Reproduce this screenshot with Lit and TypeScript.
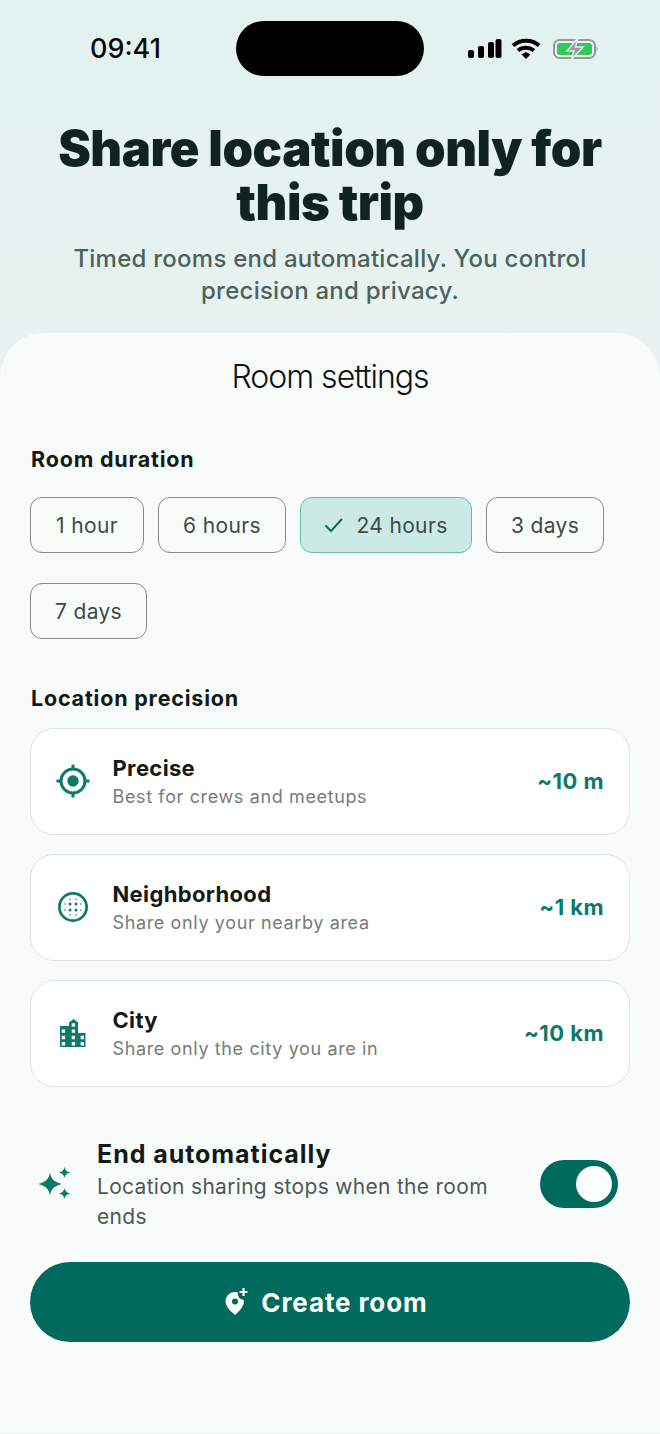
import { LitElement, css, html, svg } from "lit";
import { customElement } from "lit/decorators.js";

const durations = [
  { label: "1 hour", w: 114 },
  { label: "6 hours", w: 128 },
  { label: "24 hours", w: 172, active: true },
  { label: "3 days", w: 118 },
  { label: "7 days", w: 117 },
];

const targetIcon = svg`<svg width="36" height="36" viewBox="0 0 24 24"><circle cx="12" cy="12" r="8" fill="none" stroke="#0b7a68" stroke-width="2"/><circle cx="12" cy="12" r="3.800" fill="#0b7a68"/><path d="M12 1v3M12 20v3M1 12h3M20 12h3" stroke="#0b7a68" stroke-width="2" fill="none"/></svg>`;

const gridIcon = svg`<svg width="36" height="36" viewBox="0 0 24 24"><circle cx="12" cy="12" r="9.100" fill="none" stroke="#0b7a68" stroke-width="1.800"/><g fill="#0b7a68"><circle cx="10" cy="10" r="1"/><circle cx="14" cy="10" r="1"/><circle cx="10" cy="14" r="1"/><circle cx="14" cy="14" r="1"/><circle cx="10" cy="6.800" r=".5"/><circle cx="14" cy="6.800" r=".5"/><circle cx="10" cy="17.200" r=".5"/><circle cx="14" cy="17.200" r=".5"/><circle cx="6.800" cy="10" r=".5"/><circle cx="6.800" cy="14" r=".5"/><circle cx="17.200" cy="10" r=".5"/><circle cx="17.200" cy="14" r=".5"/></g></svg>`;

const cityIcon = svg`<svg width="26" height="28" viewBox="0 0 26 28"><path fill="#0b7a68" fill-rule="evenodd" d="M0 7h9V3.500L13.500 0 18 3.500V14h7.500v14H0V7Zm11.700-2.700v3.400h3.400V4.300h-3.400ZM1.700 10.400v3.400h3.400v-3.400H1.700Zm10 0v3.400h3.400v-3.400h-3.400ZM1.700 16.800v3.400h3.400v-3.400H1.700Zm10 0v3.400h3.400v-3.400h-3.400Zm8.900 0v3.400H24v-3.400h-3.400ZM1.700 23v3.400h3.400V23H1.700Zm10 0v3.400h3.400V23h-3.400Zm8.900 0v3.400H24V23h-3.400Z"/></svg>`;

const sparkIcon = svg`<svg width="34" height="36" viewBox="0 0 34 36"><g fill="#0b7a68"><path d="M12 6.500C13.200 13 15.500 15.500 23.500 18 15.500 20.500 13.200 23 12 29.500 10.800 23 8.500 20.500 .5 18 8.500 15.500 10.800 13 12 6.500Z"/><path d="M26.500 1c.8 3.300 2 4.500 5.500 5.500-3.500 1-4.700 2.200-5.500 5.500-.8-3.300-2-4.500-5.500-5.500 3.500-1 4.700-2.200 5.500-5.500Z"/><path d="M26.500 22c.8 3.300 2 4.500 5.500 5.500-3.500 1-4.700 2.200-5.500 5.500-.8-3.300-2-4.500-5.500-5.500 3.500-1 4.700-2.200 5.500-5.500Z"/></g></svg>`;

const pinIcon = svg`<svg width="24" height="28" viewBox="0 0 24 28"><path fill="#fff" fill-rule="evenodd" d="M11 4c1 0 2 .1 2.800.4a6 6 0 0 0 5.700 7.300c.2.700.3 1.300.3 2 0 4.400-4.500 9.700-8.800 13.300C6.700 23.400 1.500 18.200 1.500 13.500 1.500 8.200 5.700 4 11 4Zm0 6.500a3 3 0 1 0 0 6 3 3 0 0 0 0-6Z"/><path d="M19.500 0v8M15.500 4h8" stroke="#fff" stroke-width="2.200" fill="none"/></svg>`;

const statusIcons = svg`<svg width="130" height="24" viewBox="0 0 130 24">
  <g fill="#000"><rect x="0" y="13" width="6" height="8" rx="2"/><rect x="10" y="9" width="6" height="12" rx="2"/><rect x="20" y="5" width="6" height="16" rx="2"/><rect x="27.500" y="2" width="6" height="19" rx="2"/></g>
  <g fill="none" stroke="#000" stroke-width="4"><path d="M45 8.500C52.500 2 64 2 71 8.500"/><path d="M50 13.500c4.500-3.800 11-3.800 16 0"/></g><path d="M53.500 17.500 58 15l4.500 2.500L58 22Z" fill="#000"/>
  <rect x="86" y="3" width="41" height="18" rx="5.500" fill="none" stroke="#999" stroke-width="2"/><rect x="89" y="6" width="35" height="12" rx="3" fill="#34c759"/><path d="M128.500 9.500c1.300.4 1.300 4.600 0 5Z" fill="#999"/>
  <path d="M110 1 99 14h7l-3 9 12-13h-7.500Z" fill="#999" stroke="#e3f2ef" stroke-width="1.500"/></svg>`;

@customElement("app-root")
export class AppRoot extends LitElement {
  static styles = css`
    :host {
      display: block;
      width: 660px;
      height: 1434px;
      overflow: hidden;
      font-family: Inter, "Noto Sans", sans-serif;
      background: linear-gradient(#e3f2ef, #e8f2f0 340px);
      color: #111a18;
    }
    .status {
      display: flex;
      align-items: center;
      height: 55px;
      padding: 21px 0 0 90px;
    }
    .time { width: 146px; font-size: 27px; font-weight: 500; color: #0a0a0a; }
    .island { width: 188px; height: 55px; border-radius: 28px; background: #000; }
    .status-icons { margin-left: 44px; display: flex; padding-top: 1px; }
    .hero { padding: 46px 30px 0; text-align: center; }
    h1 { margin: 0; font-size: 49px; line-height: 54px; font-weight: 900; letter-spacing: -0.45px; color: #10231f; }
    .lead { margin: 13px 0 0; font-size: 24px; line-height: 32px; font-weight: 500; letter-spacing: 0.25px; color: #4b625d; }
    .sheet {
      margin-top: 26px;
      height: 1100px;
      border-radius: 44px 44px 0 0;
      background: #f7fcfb;
      padding: 0 30px;
      box-sizing: border-box;
    }
    h2 { margin: 0; padding-top: 24px; text-align: center; font-size: 32px; line-height: 40px; font-weight: 300; color: #111; letter-spacing: -1px; }
    .label { padding-left: 1px; font-size: 21.5px; line-height: 28px; font-weight: 700; letter-spacing: 0.8px; color: #111a18; }
    .label.first { margin-top: 48px; }
    .label.second { margin-top: 45px; }
    .chips { display: flex; flex-wrap: wrap; gap: 30px 14px; margin-top: 24px; }
    .chip {
      display: flex;
      align-items: center;
      justify-content: center;
      gap: 12px;
      height: 56px;
      box-sizing: border-box;
      border: 1.500px solid #858c8a;
      border-radius: 12px;
      font-size: 21px;
      letter-spacing: 0.35px;
      color: #3e4a47;
    }
    .chip.active { background: #cbeae5; border-color: #62bfae; }
    .cards { display: flex; flex-direction: column; gap: 19px; margin-top: 16px; }
    .card {
      display: flex;
      align-items: center;
      height: 107px;
      box-sizing: border-box;
      background: #fff;
      border: 1.500px solid #dfe3e2;
      border-radius: 24px;
      padding: 0 25px 0 24px;
    }
    .card .ic { width: 36px; display: flex; justify-content: center; margin: 0 21.500px 2px 0; }
    .card .txt { flex: 1; }
    .card .t { font-size: 22px; line-height: 28px; font-weight: 700; letter-spacing: 0.35px; color: #141917; }
    .card .s { font-size: 18px; line-height: 26px; letter-spacing: 0.63px; color: #757c7a; margin-top: 2px; }
    .card .v { font-size: 22px; font-weight: 700; letter-spacing: 0.45px; color: #0b7a68; padding-bottom: 2px; }
    .auto { display: flex; align-items: center; margin-top: 51px; padding-left: 8px; }
    .auto .ic { display: flex; margin: 0 25px 3px 0; }
    .auto .txt { width: 418px; }
    .auto .t { font-size: 25px; line-height: 32px; font-weight: 700; letter-spacing: 0.95px; color: #141917; }
    .auto .s { font-size: 21px; line-height: 30px; letter-spacing: 0.3px; color: #4f5856; margin-top: 2px; }
    .toggle {
      width: 78px;
      height: 48px;
      margin: 0 0 3px 25px;
      border-radius: 24px;
      background: #006a5d;
      display: flex;
      align-items: center;
      justify-content: flex-end;
      padding-right: 6px;
      box-sizing: border-box;
    }
    .knob { width: 36px; height: 36px; border-radius: 50%; background: #fff; }
    .cta {
      display: flex;
      align-items: center;
      justify-content: center;
      gap: 13px;
      height: 80px;
      margin-top: 30px;
      padding-right: 8px;
      border-radius: 40px;
      background: #006a5d;
      color: #fff;
      font-size: 26px;
      font-weight: 700;
      letter-spacing: 0.9px;
    }
    .cta .ic { display: flex; }
  `;

  render() {
    return html`
      <div class="status">
        <div class="time">09:41</div>
        <div class="island"></div>
        <div class="status-icons">${statusIcons}</div>
      </div>
      <div class="hero">
        <h1>Share location only for<br />this trip</h1>
        <p class="lead">Timed rooms end automatically. You control<br />precision and privacy.</p>
      </div>
      <div class="sheet">
        <h2>Room settings</h2>
        <div class="label first">Room duration</div>
        <div class="chips">
          ${durations.map(
            (d) => html`<div class="chip ${d.active ? "active" : ""}" style="width:${d.w}px">
              ${d.active
                ? html`<svg width="20" height="16" viewBox="0 0 20 16"><path d="M1.500 8.500 7 14 18 2" fill="none" stroke="#0b6b5d" stroke-width="2"/></svg>`
                : ""}
              <span>${d.label}</span>
            </div>`
          )}
        </div>
        <div class="label second">Location precision</div>
        <div class="cards">
          ${this.card(targetIcon, "Precise", "Best for crews and meetups", "~10 m")}
          ${this.card(gridIcon, "Neighborhood", "Share only your nearby area", "~1 km")}
          ${this.card(cityIcon, "City", "Share only the city you are in", "~10 km")}
        </div>
        <div class="auto">
          <div class="ic">${sparkIcon}</div>
          <div class="txt">
            <div class="t">End automatically</div>
            <div class="s">Location sharing stops when the room ends</div>
          </div>
          <div class="toggle"><div class="knob"></div></div>
        </div>
        <div class="cta"><span class="ic">${pinIcon}</span><span>Create room</span></div>
      </div>
    `;
  }

  card(icon: unknown, title: string, sub: string, value: string) {
    return html`<div class="card">
      <div class="ic">${icon}</div>
      <div class="txt">
        <div class="t">${title}</div>
        <div class="s">${sub}</div>
      </div>
      <div class="v">${value}</div>
    </div>`;
  }
}
